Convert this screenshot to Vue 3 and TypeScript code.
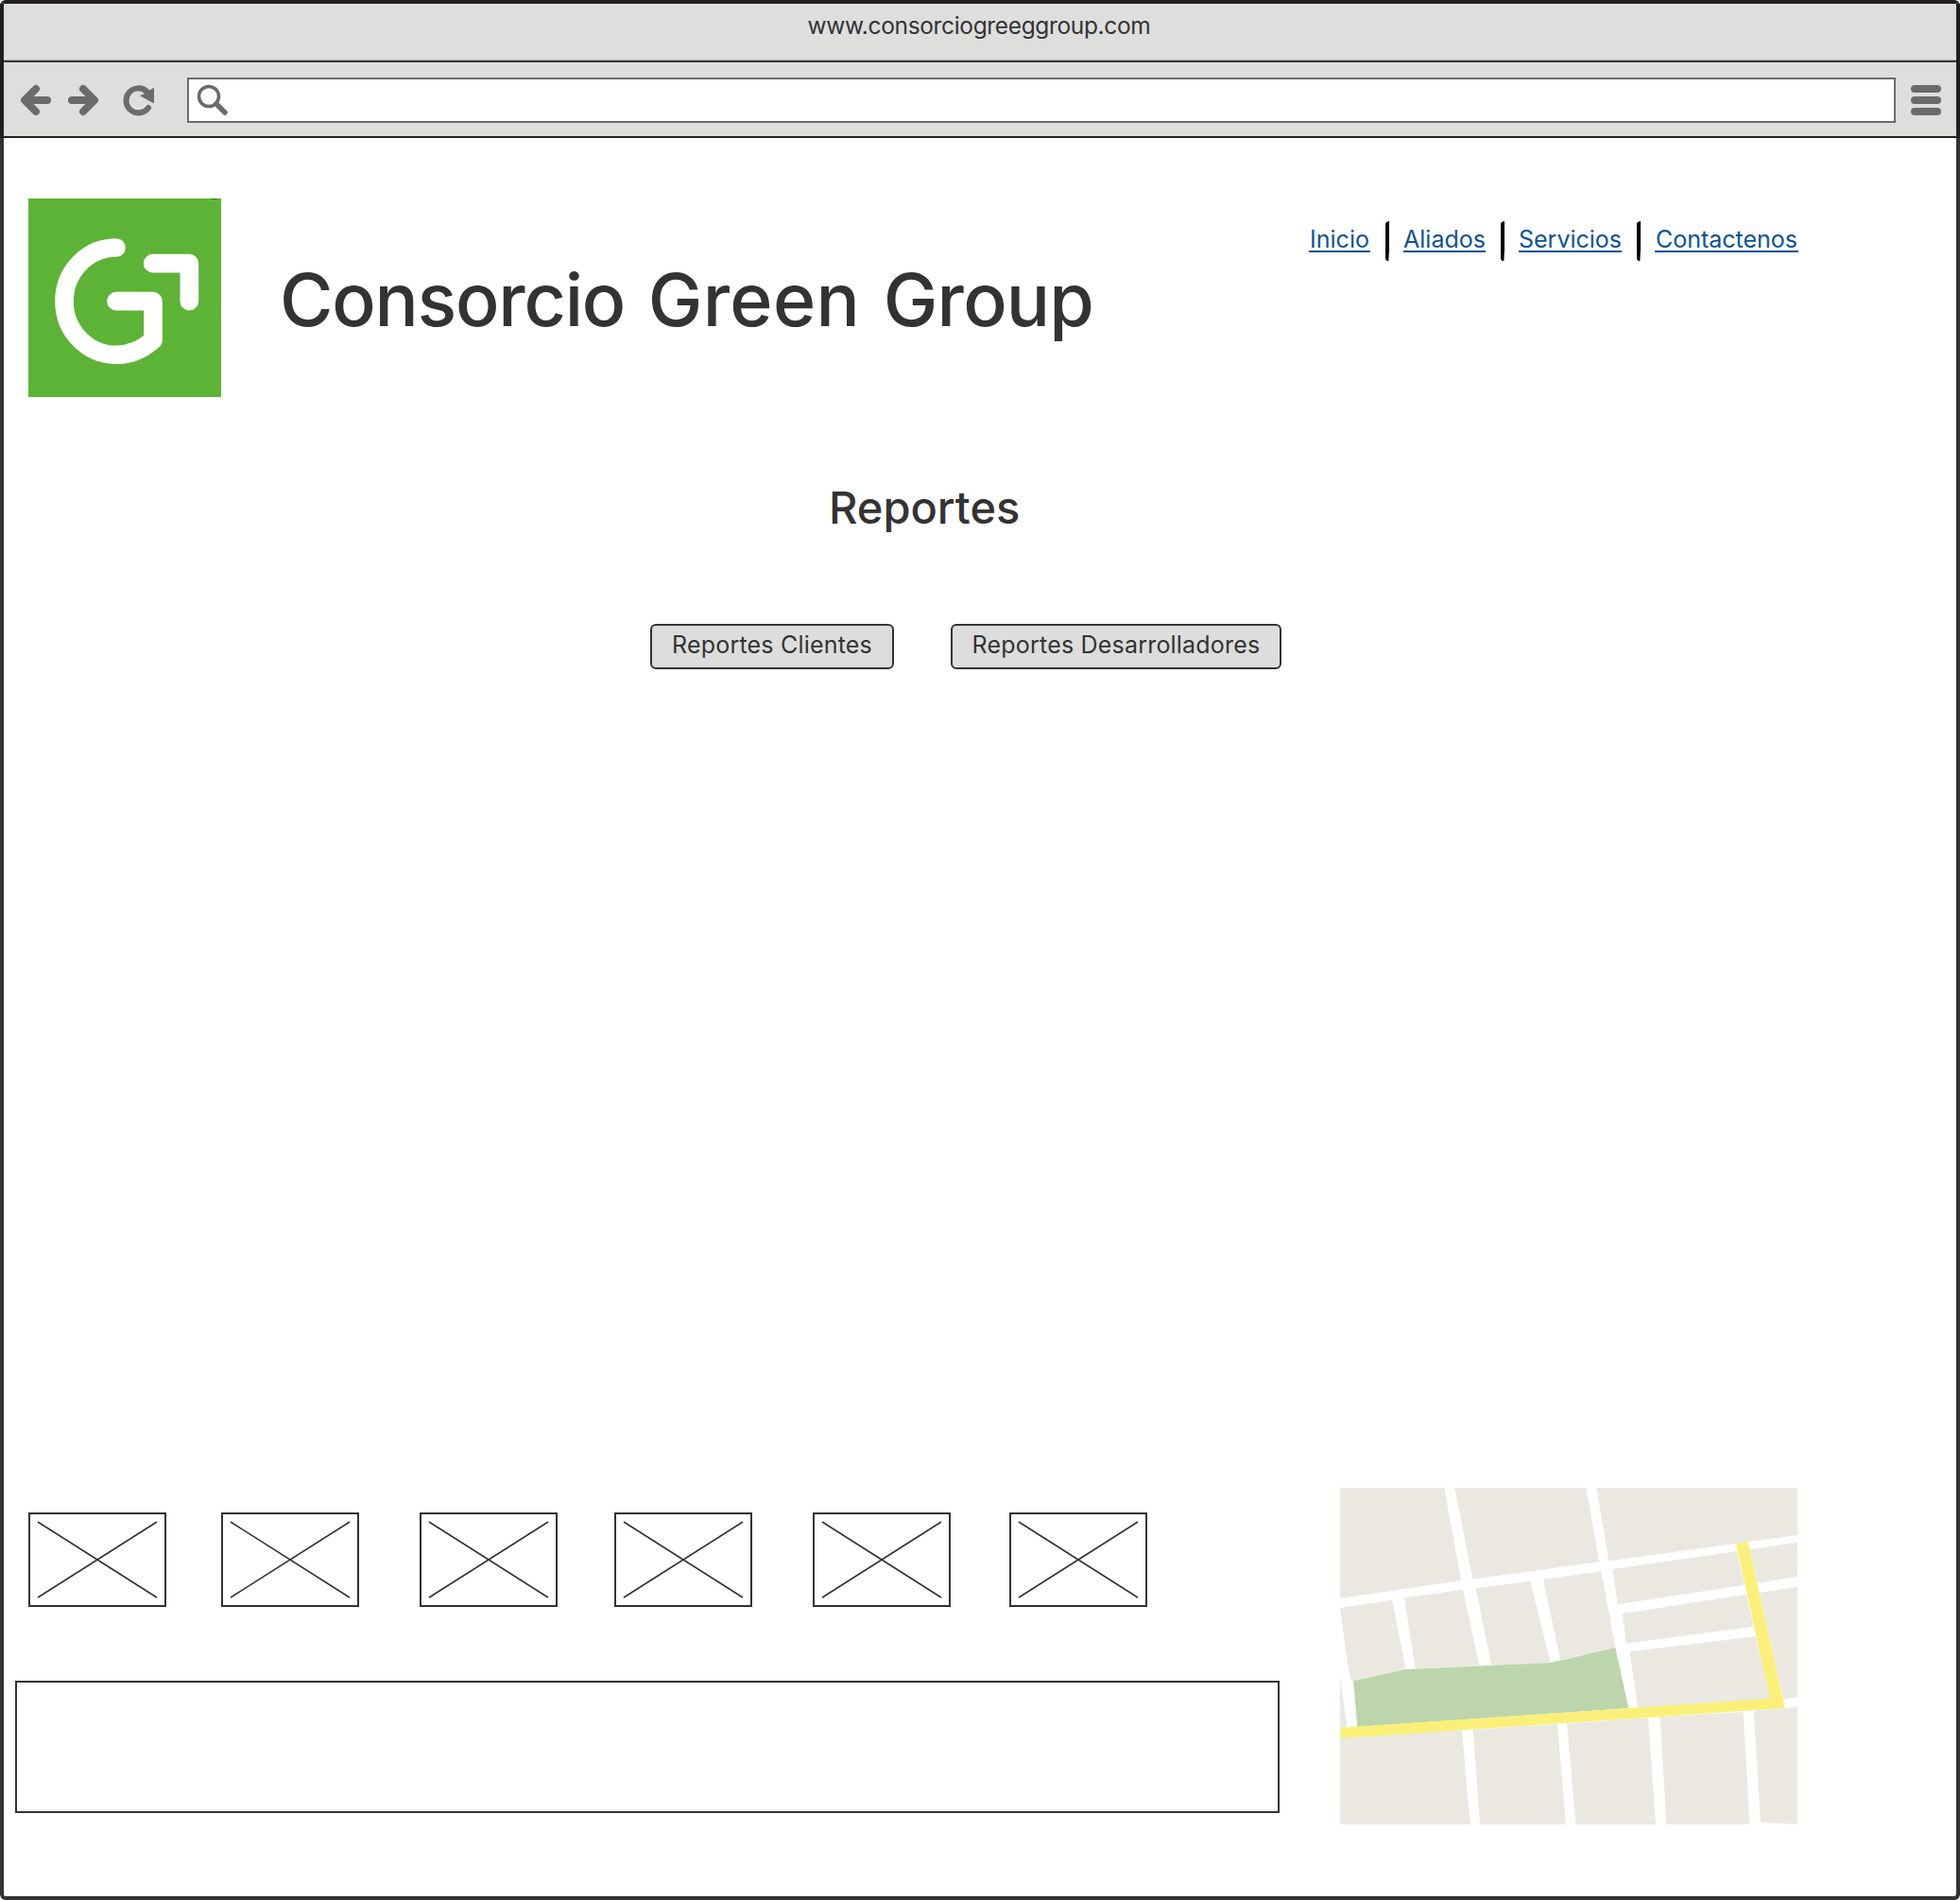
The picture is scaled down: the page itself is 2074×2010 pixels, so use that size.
<script setup lang="ts">
interface NavLink {
  label: string
  width: number
}

const address = 'www.consorciogreeggroup.com'
const links: NavLink[] = [
  { label: 'Inicio', width: 65 },
  { label: 'Aliados', width: 87 },
  { label: 'Servicios', width: 109 },
  { label: 'Contactenos', width: 152 },
]
const reports: NavLink[] = [
  { label: 'Reportes Clientes', width: 258 },
  { label: 'Reportes Desarrolladores', width: 350 },
]
// Distance between each thumbnail and the one before it
const thumbGaps: number[] = [0, 58, 64, 60, 64, 62]
</script>

<template>
  <div class="window">
    <header class="chrome">
      <div class="titlebar">{{ address }}</div>
      <div class="toolbar">
        <svg class="tools" width="194" height="78" viewBox="4 66 194 78">
          <g fill="none" stroke="#6b6b6b" stroke-width="8" stroke-linecap="round" stroke-linejoin="round">
            <path d="M38 94L26 106L38 118M27 106H50" />
            <path d="M88 94L100 106L88 118M99 106H76" />
            <path d="M157 114A13 13 0 1 1 155.5 97" stroke-width="6" />
          </g>
          <path d="M163 92.500V109.500L148 101.300L153 99Z" fill="#6b6b6b" />
        </svg>
        <div class="address">
          <svg width="44" height="43" viewBox="200 84 44 43">
            <circle cx="221" cy="102" r="10.500" fill="none" stroke="#6b6b6b" stroke-width="3.600" />
            <path d="M229 110L238 119" stroke="#6b6b6b" stroke-width="5.600" stroke-linecap="round" />
          </svg>
        </div>
        <div class="menu"><i></i><i></i><i></i></div>
      </div>
    </header>

    <main class="page">
      <div class="brand">
        <svg class="logo" width="204" height="210" viewBox="30 30 612 630" preserveAspectRatio="none">
          <path d="M30 30H642V660H30Z" fill="#5cb335" />
          <path d="M606 30H634Q620 36 606 30Z" fill="#3f5f33" />
          <g fill="none" stroke="#fff" stroke-width="59" stroke-linecap="round" stroke-linejoin="round">
            <path d="M309 186A165 170 0 0 0 309 526Q374 526 426 479V356H309" />
            <path d="M425 236H541V356" />
          </g>
        </svg>
        <h1><span class="w1">Consorcio</span> <span class="w2">Green</span> <span class="w3">Group</span></h1>
        <nav>
          <template v-for="(link, i) in links" :key="link.label">
            <svg v-if="i" class="sep" width="4" height="42" viewBox="0 0 4 42">
              <path d="M0 2L2 .5L4 0V30L3.300 42H1.500L0 40Z" />
            </svg>
            <a :style="{ width: link.width + 'px' }">{{ link.label }}</a>
          </template>
        </nav>
      </div>

      <h2>Reportes</h2>
      <div class="actions">
        <button v-for="r in reports" :key="r.label" :style="{ width: r.width + 'px' }">{{ r.label }}</button>
      </div>

      <footer>
        <div class="left">
          <div class="thumbs">
            <svg
              v-for="(gap, i) in thumbGaps"
              :key="i"
              :style="{ marginLeft: gap + 'px' }"
              width="146"
              height="100"
              viewBox="0 0 146 100"
              fill="none"
              stroke="#333"
            >
              <rect x="1" y="1" width="144" height="98" stroke-width="2" />
              <path d="M10 10L136 90M136 10L10 90" stroke-width="1.600" />
            </svg>
          </div>
          <div class="panel"></div>
        </div>

        <svg class="map" width="484" height="356" viewBox="54 42 1452 1068">
          <g fill="#ebe8e1">
            <path d="M54 42H385L438 336L54 393Z" />
            <path d="M418 42H835L877 277L475 332Z" />
            <path d="M868 42H1506V192L907 274Z" />
            <path d="M54 423L219 398L263 618L96 655L90 655Q80 622 75 578Z" />
            <path d="M258 391L444 365L496 606L293 616Z" />
            <path d="M485 361L658 338L722 597L535 605Z" />
            <path d="M699 332L883 307L928 549L753 588Z" />
            <path d="M919 300L1314 243L1338 350L936 412Z" />
            <path d="M1355 237L1506 215V323L1379 345Z" />
            <path d="M951 441L1344 380L1367 482L962 536Z" />
            <path d="M1385 375L1506 356V705L1461 714Z" />
            <path d="M973 562L1374 513L1421 714L1000 742Z" />
            <path d="M54 642L76 802L54 804Z" />
            <path d="M54 835L441 811L467 1110H54Z" />
            <path d="M476 809L744 791L771 1110H498Z" />
            <path d="M774 789L1032 772L1056 1110H802Z" />
            <path d="M1070 768L1334 753L1354 1110H1090Z" />
            <path d="M1367 749L1506 738V1110L1389 1104Z" />
          </g>
          <path d="M96 655L263 618L722 597L928 549L970 741L109 801Z" fill="#bcd5ac" />
          <path d="M54 803L1419 711L1311 220L1349 213L1466 741L54 837Z" fill="#faf079" />
        </svg>
      </footer>
    </main>
  </div>
</template>

<style>
body {
  background: #fff;
}
</style>

<style scoped>
.window {
  box-sizing: border-box;
  width: 2074px;
  height: 2010px;
  border: 4px solid #333;
  border-top-color: #231f20;
  border-radius: 6px;
  background: #fff;
  color: #333;
  font-family: Inter, "Open Sans", sans-serif;
  display: flex;
  flex-direction: column;
}
.chrome {
  box-sizing: border-box;
  height: 142px;
  flex: none;
  margin: 0 -4px;
  border: solid #231f20;
  border-width: 0 4px 2px;
  background: #dededd;
}
.titlebar {
  box-sizing: border-box;
  height: 62px;
  padding-right: 2px;
  border-bottom: 2px solid #3c3c3c;
  box-shadow: inset 0 -1px #aaa;
  text-align: center;
  font-size: 24.5px;
  line-height: 47px;
  letter-spacing: -0.35px;
}
.toolbar {
  display: flex;
  height: 78px;
}
.tools {
  flex: none;
}
.address {
  box-sizing: border-box;
  width: 1808px;
  height: 48px;
  margin-top: 16px;
  border: 2px solid #6b6b6b;
  background: #fff;
}
.address svg {
  display: block;
}
.menu {
  display: flex;
  flex-direction: column;
  gap: 4px;
  margin: 24px 0 0 16px;
}
.menu i {
  width: 32px;
  height: 8px;
  border-radius: 4px;
  background: #6b6b6b;
}
.page {
  display: flex;
  flex-direction: column;
  flex: 1;
  padding-top: 64px;
}
.brand {
  display: flex;
  height: 210px;
  padding: 0 167px 0 26px;
}
.logo {
  flex: none;
}
h1 {
  margin: 1px 0 0 62px;
  font-size: 77px;
  line-height: 212px;
  font-weight: 450;
  word-spacing: 4px;
  white-space: nowrap;
}
.w1 {
  letter-spacing: -1.2px;
}
.w2 {
  letter-spacing: 0.4px;
}
.w3 {
  letter-spacing: -0.8px;
}
nav {
  display: flex;
  margin: 24px 0 0 auto;
}
.sep {
  margin: 0 15px 0 16px;
}
nav a {
  box-sizing: border-box;
  height: 27px;
  margin-top: 6px;
  border-bottom: 2px solid #0b5394;
  color: #0b5394;
  font-size: 25px;
  line-height: 27px;
  text-align: center;
  white-space: nowrap;
}
h2 {
  margin: 87px 0 0 873px;
  font-size: 47px;
  line-height: 60px;
  font-weight: 450;
}
.actions {
  display: flex;
  gap: 60px;
  margin: 93px 0 0 684px;
}
button {
  box-sizing: border-box;
  height: 48px;
  padding: 0 0 5px;
  border: 2px solid #333;
  border-radius: 6px;
  background: #ddd;
  color: #333;
  font: 400 25px Inter, "Open Sans", sans-serif;
  letter-spacing: 0.2px;
  white-space: nowrap;
}
footer {
  display: flex;
  justify-content: space-between;
  margin: auto 168px 76px 12px;
}
.left {
  width: 1338px;
  padding-top: 26px;
}
.thumbs {
  display: flex;
  padding-left: 14px;
}
.panel {
  box-sizing: border-box;
  height: 140px;
  margin-top: 78px;
  border: 2px solid #333;
}
</style>
